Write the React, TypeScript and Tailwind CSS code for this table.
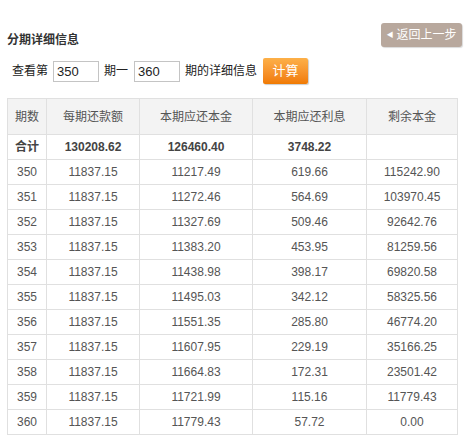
const rows = [
  ['350', '11837.15', '11217.49', '619.66', '115242.90'],
  ['351', '11837.15', '11272.46', '564.69', '103970.45'],
  ['352', '11837.15', '11327.69', '509.46', '92642.76'],
  ['353', '11837.15', '11383.20', '453.95', '81259.56'],
  ['354', '11837.15', '11438.98', '398.17', '69820.58'],
  ['355', '11837.15', '11495.03', '342.12', '58325.56'],
  ['356', '11837.15', '11551.35', '285.80', '46774.20'],
  ['357', '11837.15', '11607.95', '229.19', '35166.25'],
  ['358', '11837.15', '11664.83', '172.31', '23501.42'],
  ['359', '11837.15', '11721.99', '115.16', '11779.43'],
  ['360', '11837.15', '11779.43', '57.72', '0.00'],
];

const font = "font-['Liberation_Sans','Noto_Sans_CJK_SC',sans-serif]";

export default function App() {
  return (
    <div className={`w-[468px] h-[446px] bg-white pt-[23px] ${font}`}>
      <div className="flex justify-between pl-[7px] pr-[6px]">
        <h2 className="mt-[9px] text-[12px] font-bold text-[#333] leading-[16px]">分期详细信息</h2>
        <button className="flex h-[24px] w-[81px] items-center justify-center rounded-[3px] bg-[#b8a89d] text-[12px] text-white shadow-[1px_1px_1px_rgba(0,0,0,0.15)]">
          <span className="mr-[3px] text-[7px]">◀</span>返回上一步
        </button>
      </div>

      <div className="mt-[10px] flex h-[26px] items-center pl-[12px] text-[12px] text-[#222]">
        <span>查看第</span>
        <input
          defaultValue="350"
          className="ml-[5px] h-[21px] w-[46px] border border-[#c4c4c4] px-[3px] text-[13px] text-[#222] outline-none"
        />
        <span className="ml-[5px]">期一</span>
        <input
          defaultValue="360"
          className="ml-[6px] h-[21px] w-[46px] border border-[#c4c4c4] px-[3px] text-[13px] text-[#222] outline-none"
        />
        <span className="ml-[5px]">期的详细信息</span>
        <button className="ml-[6px] h-[26px] w-[45px] rounded-[2px] bg-gradient-to-b from-[#fdb048] to-[#f07a00] text-[13px] text-white shadow-[1px_1px_1px_rgba(0,0,0,0.2)]">
          计算
        </button>
      </div>

      <div className="mt-[14px] pl-[7px]">
        <table className="w-[450px] table-fixed border-collapse text-center text-[12px] text-[#555]">
          <colgroup>
            <col className="w-[39px]" />
            <col className="w-[93px]" />
            <col className="w-[113px]" />
            <col className="w-[114px]" />
            <col className="w-[91px]" />
          </colgroup>
          <thead>
            <tr className="h-[36px] bg-[#f3f3f3]">
              {['期数', '每期还款额', '本期应还本金', '本期应还利息', '剩余本金'].map((h) => (
                <th key={h} className="border border-[#e0e0e0] font-normal">{h}</th>
              ))}
            </tr>
          </thead>
          <tbody>
            <tr className="h-[25px] font-bold text-[#444]">
              <td className="border border-[#e0e0e0]">合计</td>
              <td className="border border-[#e0e0e0]">130208.62</td>
              <td className="border border-[#e0e0e0]">126460.40</td>
              <td className="border border-[#e0e0e0]">3748.22</td>
              <td className="border border-[#e0e0e0]"></td>
            </tr>
            {rows.map((r) => (
              <tr key={r[0]} className="h-[25px]">
                {r.map((c, i) => (
                  <td key={i} className="border border-[#e0e0e0]">{c}</td>
                ))}
              </tr>
            ))}
          </tbody>
        </table>
      </div>
    </div>
  );
}
